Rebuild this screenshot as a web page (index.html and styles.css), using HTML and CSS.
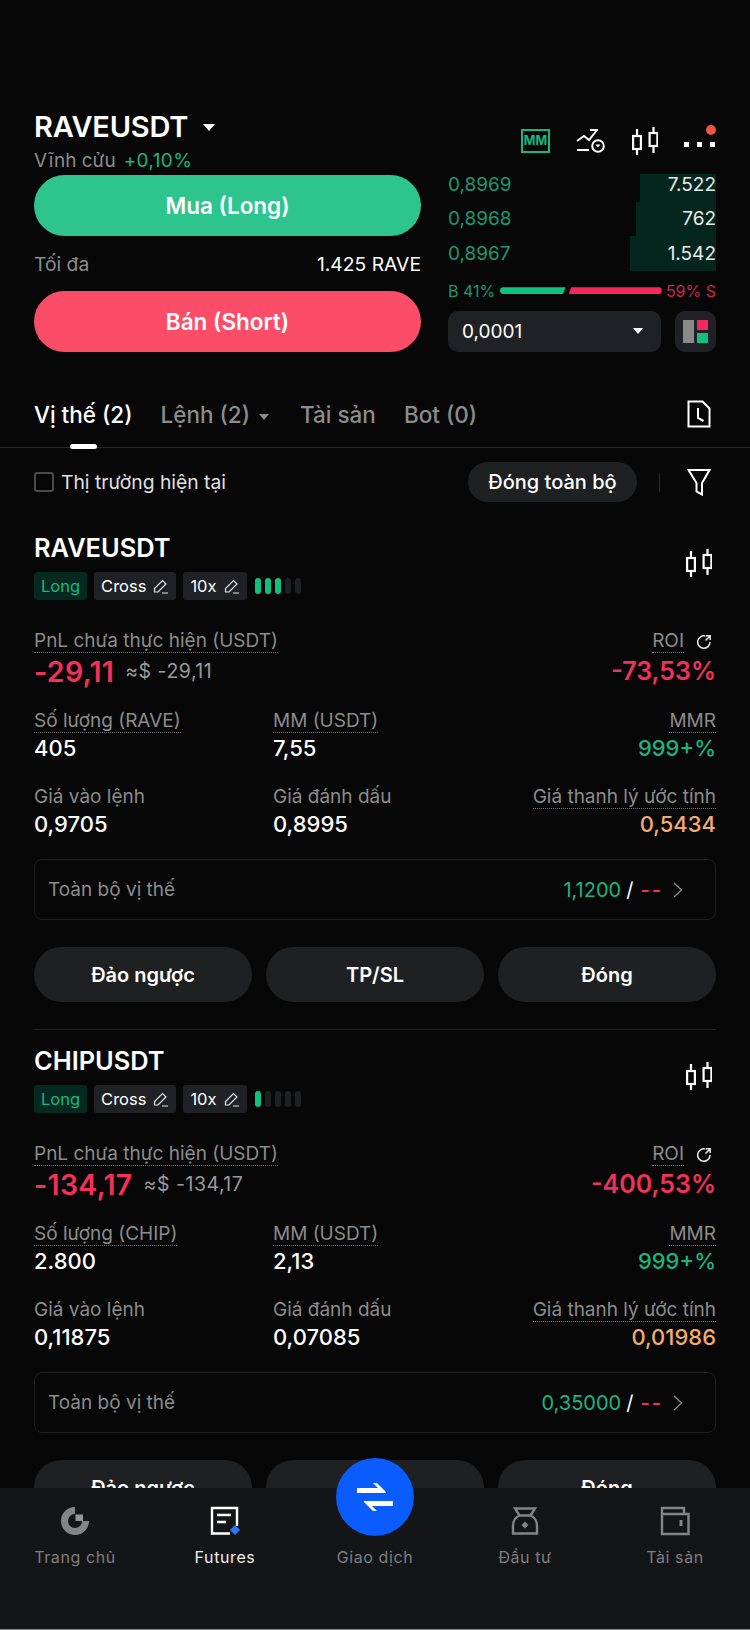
FILE: index.html
```html
<!DOCTYPE html>
<html lang="vi">
<head>
<meta charset="utf-8">
<title>RAVEUSDT Futures</title>
<link rel="stylesheet" href="styles.css">
</head>
<body>
<svg class="defs" width="0" height="0" aria-hidden="true">
  <symbol id="candles" viewBox="0 0 26 28">
    <path d="M5 2v7M5 22v6M21.500 0v6M21.500 19v7" fill="none" stroke="currentColor" stroke-width="2.200"/>
    <rect x="1.100" y="9" width="7.800" height="13" fill="none" stroke="currentColor" stroke-width="2.200"/>
    <rect x="17.600" y="6" width="7.800" height="13" fill="none" stroke="currentColor" stroke-width="2.200"/>
  </symbol>
  <symbol id="pen" viewBox="0 0 16 16">
    <path d="M1.500 14v-3.500L9.500 2.500l3.500 3.500-8 8zM9 15h6" fill="none" stroke="currentColor" stroke-width="1.200"/>
  </symbol>
  <symbol id="refresh" viewBox="0 0 16 16">
    <path d="M9.500 2.100A6.200 6.200 0 1 0 14 8M9.500 6.500 14 2M10 1.800h4.200V6" fill="none" stroke="currentColor" stroke-width="1.500"/>
  </symbol>
  <symbol id="chev" viewBox="0 0 10 16">
    <path d="M1 1l7.500 7L1 15" fill="none" stroke="currentColor" stroke-width="1.300"/>
  </symbol>
</svg>

<div class="screen">
  <section class="market">
    <div class="trade">
      <div class="pair"><h1>RAVEUSDT</h1><span class="caret caret-lg"></span></div>
      <div class="sub"><span class="muted">Vĩnh cửu</span><span class="green change">+0,10%</span></div>
      <div class="btn-big buy">Mua (Long)</div>
      <div class="max"><span class="muted">Tối đa</span><span>1.425 RAVE</span></div>
      <div class="btn-big sell">Bán (Short)</div>
    </div>
    <div class="side">
      <div class="tools">
        <span class="tool-mm">MM</span>
        <svg class="tool-trend" width="29" height="24" viewBox="0 0 29 24">
          <path d="M1 12l7-5 5 4 8-10M14 1h8M1 21h12" fill="none" stroke="#fff" stroke-width="2"/>
          <circle cx="22" cy="17" r="5.800" fill="none" stroke="#fff" stroke-width="2"/>
          <path d="M19.500 15.500h5l-2.500 3z" fill="#fff"/>
        </svg>
        <svg class="tool-candle"><use href="#candles"/></svg>
        <div class="dots"><i></i><i></i><i></i><b></b></div>
      </div>
      <div class="book">
        <div class="level first"><span class="depth d1"></span><span class="price">0,8969</span><span class="qty">7.522</span></div>
        <div class="level"><span class="depth d2"></span><span class="price">0,8968</span><span class="qty">762</span></div>
        <div class="level"><span class="depth d3"></span><span class="price">0,8967</span><span class="qty">1.542</span></div>
      </div>
      <div class="ratio">
        <span class="dimgreen">B 41%</span>
        <div class="ratio-bar"><i class="rb"></i><i class="rs"></i></div>
        <span class="dimred">59% S</span>
      </div>
      <div class="controls">
        <div class="select"><span>0,0001</span><span class="caret caret-sel"></span></div>
        <div class="layout-btn">
          <span class="lb-grey"></span>
          <span class="lb-col"><i class="lb-red"></i><i class="lb-green"></i></span>
        </div>
      </div>
    </div>
  </section>

  <nav class="tabs">
    <span class="tab active">Vị thế (2)</span>
    <span class="tab">Lệnh (2)<span class="caret caret-sm"></span></span>
    <span class="tab">Tài sản</span>
    <span class="tab">Bot (0)</span>
    <svg class="doc-icon" width="24" height="28" viewBox="0 0 24 28">
      <path d="M1.500 1.500h14l7 7v18h-21z" fill="none" stroke="#fff" stroke-width="2"/>
      <path d="M11 8v10l5.500 3" fill="none" stroke="#fff" stroke-width="2"/>
    </svg>
  </nav>

  <div class="filter">
    <span class="check"></span>
    <span class="filter-label">Thị trường hiện tại</span>
    <span class="close-all">Đóng toàn bộ</span>
    <span class="vline"></span>
    <svg class="funnel" width="24" height="28" viewBox="0 0 24 28">
      <path d="M1.500 2h21L15 15v11.500L9.500 23.500V15z" fill="none" stroke="#fff" stroke-width="2"/>
    </svg>
  </div>

  <article class="card">
    <div class="card-head">
      <h2>RAVEUSDT</h2>
      <svg class="head-candle"><use href="#candles"/></svg>
    </div>
    <div class="badges">
      <span class="badge long">Long</span>
      <span class="badge">Cross<svg class="pen"><use href="#pen"/></svg></span>
      <span class="badge">10x<svg class="pen"><use href="#pen"/></svg></span>
      <span class="meter"><i class="on"></i><i class="on"></i><i class="on"></i><i></i><i></i></span>
    </div>
    <div class="pnl">
      <div>
        <span class="label">PnL chưa thực hiện (USDT)</span>
        <div class="pnl-val"><b class="red big">-29,11</b><span class="approx">≈$ -29,11</span></div>
      </div>
      <div class="right">
        <span class="roi"><span class="label">ROI</span><svg class="refresh"><use href="#refresh"/></svg></span>
        <div class="pnl-val end"><b class="red big-r">-73,53%</b></div>
      </div>
    </div>
    <div class="stats">
      <div><span class="label">Số lượng (RAVE)</span><div class="val">405</div></div>
      <div><span class="label">MM (USDT)</span><div class="val">7,55</div></div>
      <div class="right"><span class="label">MMR</span><div class="val green">999+%</div></div>
      <div><span class="label plain">Giá vào lệnh</span><div class="val">0,9705</div></div>
      <div><span class="label plain">Giá đánh dấu</span><div class="val">0,8995</div></div>
      <div class="right"><span class="label">Giá thanh lý ước tính</span><div class="val orange">0,5434</div></div>
    </div>
    <div class="whole">
      <span class="muted">Toàn bộ vị thế</span>
      <span class="whole-val"><span class="green">1,1200</span><span class="slash">/</span><span class="red dashes">--</span><svg class="chev"><use href="#chev"/></svg></span>
    </div>
    <div class="actions"><span>Đảo ngược</span><span>TP/SL</span><span>Đóng</span></div>
  </article>

  <article class="card">
    <div class="card-head">
      <h2>CHIPUSDT</h2>
      <svg class="head-candle"><use href="#candles"/></svg>
    </div>
    <div class="badges">
      <span class="badge long">Long</span>
      <span class="badge">Cross<svg class="pen"><use href="#pen"/></svg></span>
      <span class="badge">10x<svg class="pen"><use href="#pen"/></svg></span>
      <span class="meter"><i class="on"></i><i></i><i></i><i></i><i></i></span>
    </div>
    <div class="pnl">
      <div>
        <span class="label">PnL chưa thực hiện (USDT)</span>
        <div class="pnl-val"><b class="red big">-134,17</b><span class="approx">≈$ -134,17</span></div>
      </div>
      <div class="right">
        <span class="roi"><span class="label">ROI</span><svg class="refresh"><use href="#refresh"/></svg></span>
        <div class="pnl-val end"><b class="red big-r">-400,53%</b></div>
      </div>
    </div>
    <div class="stats">
      <div><span class="label">Số lượng (CHIP)</span><div class="val">2.800</div></div>
      <div><span class="label">MM (USDT)</span><div class="val">2,13</div></div>
      <div class="right"><span class="label">MMR</span><div class="val green">999+%</div></div>
      <div><span class="label plain">Giá vào lệnh</span><div class="val">0,11875</div></div>
      <div><span class="label plain">Giá đánh dấu</span><div class="val">0,07085</div></div>
      <div class="right"><span class="label">Giá thanh lý ước tính</span><div class="val orange">0,01986</div></div>
    </div>
    <div class="whole">
      <span class="muted">Toàn bộ vị thế</span>
      <span class="whole-val"><span class="green">0,35000</span><span class="slash">/</span><span class="red dashes">--</span><svg class="chev"><use href="#chev"/></svg></span>
    </div>
    <div class="actions"><span>Đảo ngược</span><span>TP/SL</span><span>Đóng</span></div>
  </article>

  <footer class="bottom-nav">
    <div class="nav-item">
      <svg width="30" height="30" viewBox="0 0 30 30">
        <path d="M15 1A14 14 0 1 0 29 15H22A7 7 0 1 1 15 8z" fill="#858585"/>
        <rect x="15.500" y="8.500" width="7.500" height="6.500" fill="#969696"/>
      </svg>
      <span>Trang chủ</span>
    </div>
    <div class="nav-item active">
      <svg width="30" height="30" viewBox="0 0 30 30">
        <path d="M20 27.500H2V2h25v18" fill="none" stroke="#fff" stroke-width="2.400"/>
        <path d="M7 9h14M7 16h9" fill="none" stroke="#fff" stroke-width="2.400"/>
        <path d="M25 19l5 5-5 5-5-5z" fill="#2979ff"/>
      </svg>
      <span>Futures</span>
    </div>
    <div class="nav-item nav-trade"><span>Giao dịch</span></div>
    <div class="nav-item">
      <svg width="30" height="30" viewBox="0 0 30 30">
        <path d="M5 2.500h20l-4.500 7c4 1.500 6.500 6 6.500 10.500v7.500H3V20c0-4.500 2.500-9 6.500-10.500zM9.500 9.500h11" fill="none" stroke="#858585" stroke-width="2.400"/>
        <path d="M15 15.500l3.500 3.500-3.500 3.500-3.500-3.500z" fill="#858585"/>
      </svg>
      <span>Đầu tư</span>
    </div>
    <div class="nav-item">
      <svg width="30" height="30" viewBox="0 0 30 30">
        <path d="M2 2h22v6h4.500v20H2zM2 8h22" fill="none" stroke="#858585" stroke-width="2.400"/>
        <path d="M21 14v6" fill="none" stroke="#858585" stroke-width="3"/>
      </svg>
      <span>Tài sản</span>
    </div>
  </footer>
  <div class="fab">
    <svg width="38" height="30" viewBox="0 0 38 30">
      <path d="M1 11h29v-1L21 1h-4l5 5H1zM37 19H8v1l9 9h4l-5-5h21z" fill="#fff"/>
    </svg>
  </div>
</div>
</body>
</html>
```

FILE: styles.css
```css
* { box-sizing: border-box; }
html, body { margin: 0; padding: 0; background: #060606; }
body { font-family: Inter, "Noto Sans", "Liberation Sans", sans-serif; color: #fff; }
.defs { position: absolute; }
.screen { position: relative; width: 750px; height: 1630px; overflow: hidden; background: #070707; }

.muted { color: #8c8c8c; }
.green { color: #17b784; }
.red { color: #f2305a; }
.orange { color: #f5ab6e; }
.dimgreen { color: #169a72; }
.dimred { color: #c42a4d; }

.caret { display: inline-block; width: 0; height: 0; border-left: 6px solid transparent; border-right: 6px solid transparent; border-top: 7px solid #fff; }
.caret-lg { margin-left: 15px; }
.caret-sm { border-left-width: 5px; border-right-width: 5px; border-top: 6px solid #8c8c8c; margin-left: 8px; vertical-align: 3px; }
.caret-sel { border-left-width: 5px; border-right-width: 5px; border-top-width: 6px; }

.market { display: flex; justify-content: space-between; padding: 110px 34px 0; }
.trade { width: 387px; }
.pair { display: flex; align-items: center; height: 34px; }
.pair h1 { margin: 0; font-size: 29px; line-height: 34px; font-weight: 600; letter-spacing: -.2px; }
.sub { display: flex; gap: 8px; margin-top: 7px; font-size: 19px; line-height: 20px; }
.change { letter-spacing: .4px; }
.btn-big { display: flex; align-items: center; justify-content: center; height: 61px; border-radius: 31px; font-size: 22.500px; font-weight: 600; }
.buy { margin-top: 4px; background: #2ec48d; }
.sell { background: #fb4d68; }
.max { display: flex; justify-content: space-between; align-items: center; height: 55px; font-size: 19.300px; }

.side { width: 268px; }
.tools { display: flex; align-items: center; height: 57px; padding: 4px 0 0 73px; }
.tool-mm { display: flex; align-items: center; justify-content: center; width: 29px; height: 24px; border: 2.500px solid #17b784; color: #17b784; font-size: 12.500px; font-weight: 700; }
.tool-trend { margin-left: 26px; }
.tool-candle { width: 26px; height: 28px; margin-left: 27px; color: #fff; }
.dots { position: relative; display: flex; gap: 8px; margin-left: 26px; padding-top: 8px; }
.dots i { width: 5px; height: 5px; background: #fff; }
.dots b { position: absolute; right: -1px; top: -9px; width: 10px; height: 10px; border-radius: 50%; background: #f0533f; }

.book { font-size: 19px; }
.level { position: relative; display: flex; justify-content: space-between; align-items: center; height: 34.600px; }
.price { position: relative; color: #169a72; }
.qty { position: relative; color: #ececec; }
.depth { position: absolute; right: 0; top: 0; bottom: 0; background: #04261c; }
.first .depth { top: 7px; }
.d1 { width: 76px; }
.d2 { width: 80px; }
.d3 { width: 86px; }

.ratio { display: flex; align-items: center; justify-content: space-between; height: 22px; margin-top: 9px; font-size: 16px; }
.ratio-bar { display: flex; gap: 3px; width: 162px; height: 7px; }
.rb { width: 66px; background: #10c07f; border-radius: 4px 0 0 4px; clip-path: polygon(0 0, 100% 0, 96% 100%, 0 100%); }
.rs { flex: 1; background: #f4285a; border-radius: 0 4px 4px 0; clip-path: polygon(3% 0, 100% 0, 100% 100%, 0 100%); }
.controls { display: flex; justify-content: space-between; margin-top: 9px; }
.select { display: flex; align-items: center; justify-content: space-between; width: 213px; height: 41px; padding: 0 18px 0 14px; border-radius: 10px; background: #1f2124; font-size: 19px; }
.layout-btn { display: flex; gap: 3px; align-items: stretch; width: 41px; height: 41px; padding: 9px 8px; border-radius: 10px; background: #1f2124; }
.lb-grey { flex: 1; background: #8a8a8a; }
.lb-col { display: flex; flex-direction: column; gap: 3px; flex: 1; }
.lb-col i { flex: 1; }
.lb-red { background: #f4285a; }
.lb-green { background: #10c07f; }

.tabs { position: relative; display: flex; align-items: center; gap: 28px; height: 58px; margin-top: 38px; padding: 0 34px 9px; border-bottom: 1px solid #26282a; font-size: 22.500px; font-weight: 500; color: #8c8c8c; }
.tab.active { position: relative; color: #fff; }
.tab.active::after { content: ""; position: absolute; left: 36px; bottom: -21px; width: 27px; height: 5px; border-radius: 3px; background: #fff; }
.tab .caret-sm { margin: 0 3px 0 9px; }
.doc-icon { margin-left: auto; margin-right: 5px; }

.filter { display: flex; align-items: center; padding: 14px 34px 0; height: 54px; font-size: 19.300px; color: #e0e0e0; }
.check { width: 20px; height: 20px; border: 2px solid #4a4a4a; border-radius: 3px; margin-right: 7px; }
.close-all { margin-left: auto; display: flex; align-items: center; justify-content: center; width: 169px; height: 40px; border-radius: 20px; background: #1e2022; color: #fff; font-size: 20px; font-weight: 500; }
.vline { width: 1px; height: 19px; margin: 0 27px 0 22px; background: #2b2b2b; }
.funnel { margin-right: 5px; }

.card { margin: 15px 34px 0; padding: 16px 0 27px; }
.card + .card { margin-top: 0; border-top: 1px solid #1d1f20; }
.card-head { display: flex; justify-content: space-between; align-items: center; height: 30px; }
.card-head h2 { margin: 0; font-size: 25.400px; line-height: 30px; font-weight: 600; }
.head-candle { width: 26px; height: 28px; color: #fff; margin: 0 4px -30px 0; }
.badges { display: flex; align-items: center; gap: 7px; height: 28px; margin-top: 9px; }
.badge { display: flex; align-items: center; gap: 7px; height: 28px; padding: 0 7px; border-radius: 3px; background: #1f2124; font-size: 16.500px; }
.badge.long { background: #05291e; color: #17b784; }
.pen { width: 16px; height: 16px; color: #e6e6e6; }
.meter { display: flex; gap: 4px; margin-left: 1px; }
.meter i { width: 6px; height: 16px; border-radius: 3px; background: #1d1f20; }
.meter i.on { background: #10c07f; }

.label { display: inline-block; font-size: 19px; line-height: 22px; color: #8c8c8c; border-bottom: 1px dotted #6e6e6e; }
.label.plain { border-bottom-color: transparent; }
.right { text-align: right; }
.pnl { display: flex; justify-content: space-between; margin-top: 30px; }
.pnl-val { display: flex; align-items: center; gap: 11px; height: 30px; margin-top: 3px; }
.pnl-val.end { justify-content: flex-end; }
.big { font-size: 28.500px; font-weight: 600; letter-spacing: .3px; }
.big-r { font-size: 25px; font-weight: 600; }
.approx { font-size: 19.500px; color: #9a9a9a; letter-spacing: .5px; }
.roi { display: inline-flex; align-items: center; gap: 12px; padding-right: 4px; }
.refresh { width: 16px; height: 16px; color: #e6e6e6; }
.stats { display: grid; grid-template-columns: 239px 1fr 1fr; row-gap: 25px; margin-top: 24px; }
.val { font-size: 22px; line-height: 26px; font-weight: 500; margin-top: 2px; }

.whole { display: flex; justify-content: space-between; align-items: center; height: 61px; margin-top: 22px; padding: 0 32px 0 13px; border: 1px solid #1c1e20; border-radius: 8px; font-size: 19px; }
.whole-val { display: flex; align-items: center; font-size: 20px; }
.slash { margin: 0 7px 0 5px; }
.dashes { letter-spacing: 2px; font-weight: 600; }
.chev { width: 10px; height: 16px; margin-left: 10px; color: #8c8c8c; }
.actions { display: grid; grid-template-columns: repeat(3, 1fr); gap: 14px; margin-top: 27px; }
.actions span { display: flex; align-items: center; justify-content: center; height: 55px; border-radius: 28px; background: #1e2022; font-size: 20px; font-weight: 600; }

.bottom-nav { position: absolute; left: 0; right: 0; bottom: 0; display: grid; grid-template-columns: repeat(5, 1fr); height: 142px; padding-top: 18px; background: #131517; border-bottom: 1px solid #888; }
.nav-item { display: flex; flex-direction: column; align-items: center; gap: 11px; font-size: 16px; letter-spacing: .6px; color: #7f7f7f; }
.nav-item.active { color: #f0f0f0; }
.nav-item svg { display: block; }
.nav-trade { justify-content: flex-start; padding-top: 41px; }
.fab { position: absolute; left: 336px; top: 1458px; display: flex; align-items: center; justify-content: center; width: 78px; height: 78px; border-radius: 50%; background: #0a5cff; }
```
